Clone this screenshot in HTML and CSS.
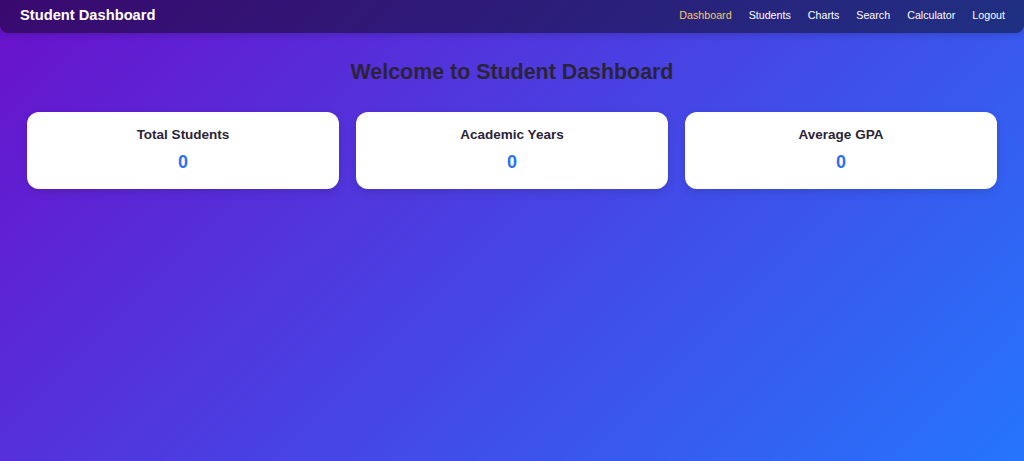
FILE: index.html
```html
<!DOCTYPE html>
<html>
<head>
<meta charset="utf-8">
<link rel="stylesheet" href="styles.css">
</head>
<body>
<nav class="navbar">
  <div class="brand">Student Dashboard</div>
  <div class="links">
    <a class="link active">Dashboard</a>
    <a class="link">Students</a>
    <a class="link">Charts</a>
    <a class="link">Search</a>
    <a class="link">Calculator</a>
    <a class="link">Logout</a>
  </div>
</nav>
<main class="main">
  <h2 class="welcome">Welcome to Student Dashboard</h2>
  <div class="cards">
    <div class="card"><div class="card-title">Total Students</div><div class="card-value">0</div></div>
    <div class="card"><div class="card-title">Academic Years</div><div class="card-value">0</div></div>
    <div class="card"><div class="card-title">Average GPA</div><div class="card-value">0</div></div>
  </div>
</main>
</body>
</html>
```

FILE: styles.css
```css
html, body {
  margin: 0;
  height: 100%;
}
body {
  font-family: "Liberation Sans", Arial, sans-serif;
  background: linear-gradient(135deg, #6a11cb 0%, #2575fc 100%);
  min-height: 461px;
}
.navbar {
  height: 33px;
  box-sizing: border-box;
  padding: 0 19px 4px 20px;
  display: flex;
  align-items: center;
  justify-content: space-between;
  background: rgba(0, 0, 0, 0.45);
  border-radius: 0 0 8px 8px;
  box-shadow: 0 2px 6px rgba(0, 0, 0, 0.15);
}
.brand {
  color: #fff;
  font-weight: bold;
  font-size: 14.7px;
}
.links {
  display: flex;
  gap: 17px;
}
.link {
  color: #fff;
  font-size: 10.7px;
  text-decoration: none;
}
.link.active {
  color: #f5c96a;
}
.main {
  padding: 0 27px;
}
.welcome {
  margin: 27px 0 27px;
  text-align: center;
  font-size: 21.4px;
  color: #2b2438;
}
.cards {
  display: grid;
  grid-template-columns: repeat(3, 1fr);
  gap: 17px;
}
.card {
  background: #fff;
  border-radius: 12px;
  height: 77px;
  box-sizing: border-box;
  padding-top: 15px;
  text-align: center;
  box-shadow: 0 3px 8px rgba(0, 0, 0, 0.12);
}
.card-title {
  font-size: 13.5px;
  font-weight: bold;
  color: #2b2438;
}
.card-value {
  margin-top: 10px;
  font-size: 18px;
  font-weight: bold;
  color: #2a72f5;
}
```
